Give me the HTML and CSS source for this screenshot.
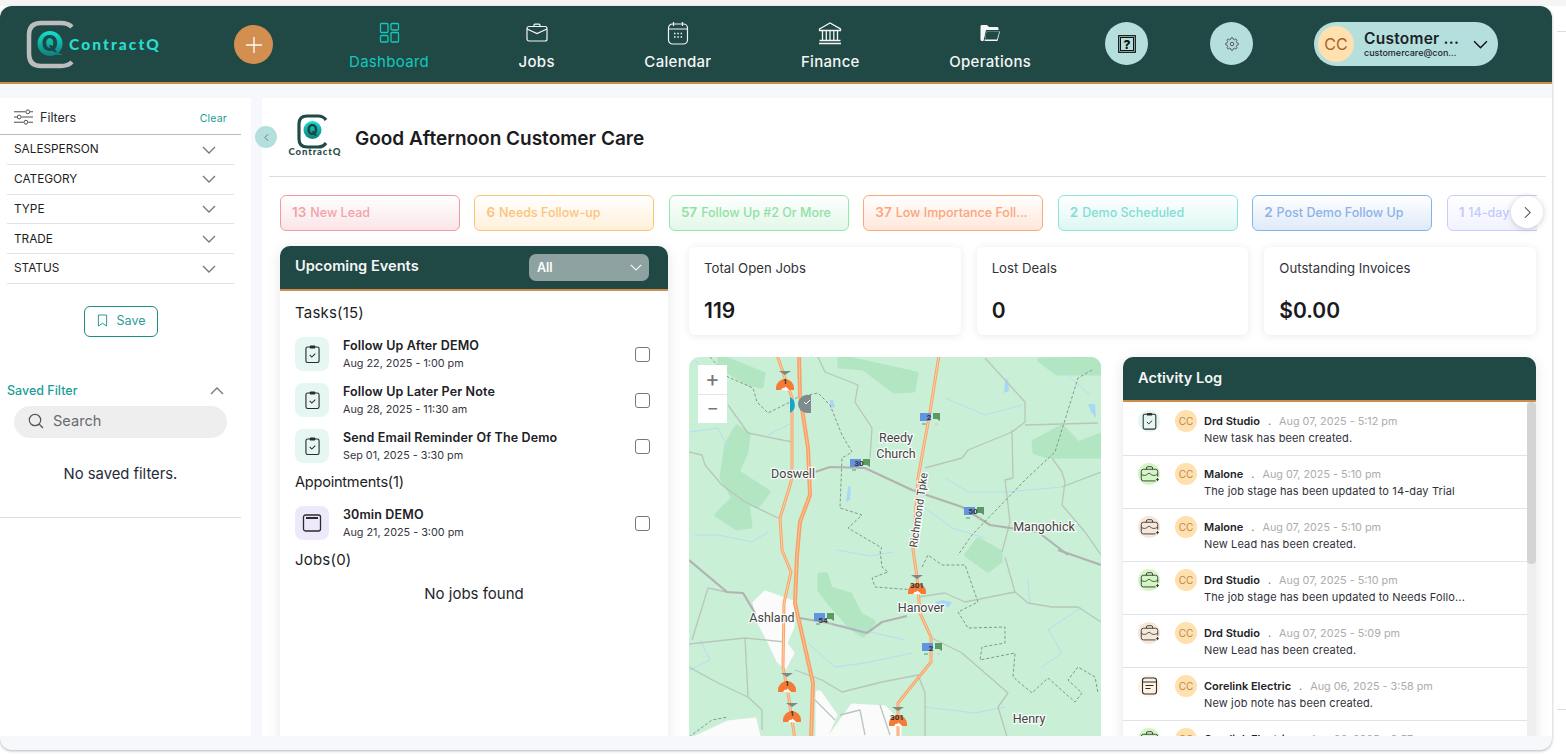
FILE: index.html
```html
<!DOCTYPE html>
<html lang="en">
<head>
<meta charset="utf-8">
<title>ContractQ Dashboard</title>
<link rel="stylesheet" href="styles.css">
</head>
<body>
<svg class="sprite" aria-hidden="true">
  <symbol id="i-chev" viewBox="0 0 14 8"><path d="M1 1l6 6 6-6" fill="none" stroke="currentColor" stroke-width="1.3"/></symbol>
  <symbol id="i-clip" viewBox="0 0 16 20"><rect x="1" y="2.500" width="14" height="16.500" rx="1.800" fill="none" stroke="currentColor" stroke-width="1.200"/><rect x="5" y="1" width="6" height="3" rx="1" fill="currentColor"/><path d="M5 11l2.200 2.200L11 9.500" fill="none" stroke="currentColor" stroke-width="1.100"/></symbol>
  <symbol id="i-case" viewBox="0 0 22 20"><path d="M7.500 4.500V3a1.500 1.500 0 0 1 1.500-1.500h4A1.500 1.500 0 0 1 14.500 3v1.500" fill="none" stroke="currentColor" stroke-width="1"/><path d="M18 18H4a2.500 2.500 0 0 1-2.500-2.500V7A2.500 2.500 0 0 1 4 4.500h14A2.500 2.500 0 0 1 20.500 7v6" fill="none" stroke="currentColor" stroke-width="1"/><path d="M1.500 10.500c3 1.500 4 1.500 6 .5l3-2 3 2c2 1 3 1 7-.5" fill="none" stroke="currentColor" stroke-width=".9"/><path d="M18.500 16.500h3.500M20.250 14.700v3.600" stroke="currentColor" stroke-width="1"/></symbol>
  <symbol id="i-note" viewBox="0 0 16 18"><rect x="1" y="1" width="14" height="16" rx="2.500" fill="none" stroke="currentColor" stroke-width="1.100"/><path d="M1 5h14M4 8.500h8M4 11.500h5" fill="none" stroke="currentColor" stroke-width="1"/></symbol>
  <symbol id="m-dome" viewBox="0 0 22 22"><path d="M5 0h12l-6 4z" fill="#7c8a8c"/><path d="M2 19v-2a9 9 0 0 1 18 0v2z" fill="#f47a35"/><path d="M7 19l2-2.500 1 .8 1.500-1.800 1.500 1.500 1 .8 1.500 1.700z" fill="#fff"/></symbol>
  <symbol id="m-flag" viewBox="0 0 22 12"><path d="M1 0h11v7l-3 1H1z" fill="#6394e2"/><path d="M14 0h7v8l-3-2h-4z" fill="#5b9a63"/><path d="M3 11h4" stroke="#5b9a63"/><path d="M16 11h3" stroke="#f2b6b6"/></symbol>
</svg>

<div class="app">
  <header class="topbar">
    <svg class="logo" viewBox="26 20 136 50" aria-label="ContractQ">
      <defs><linearGradient id="qg" x1="0" y1="0" x2="0" y2="1"><stop offset="0" stop-color="#12e2cf"/><stop offset="1" stop-color="#0e7f7c"/></linearGradient></defs>
      <path d="M72 27c-3-3-6-4-11-4H41c-8 0-12 4-12 12v19c0 8 4 12 12 12h20c5 0 8-1 11-4" fill="none" stroke="#bdbdbd" stroke-width="4.500"/>
      <circle cx="50" cy="43.500" r="12.500" fill="url(#qg)"/>
      <path d="M55 51l8 4h-8z" fill="#0e7f7c"/>
      <text class="logo-q" x="50" y="51">Q</text>
      <text class="logo-word" x="69" y="50">ContractQ</text>
    </svg>
    <button class="plus" aria-label="Add"><svg viewBox="0 0 20 20"><path d="M1 10h18M10 1v18" stroke="#fff" stroke-width="1.500"/></svg></button>
    <nav class="nav">
      <a class="nav-item active"><svg viewBox="0 0 24 24"><g fill="none" stroke="currentColor" stroke-width="1.300"><rect x="3.500" y="2.500" width="7.500" height="9" rx="1"/><rect x="14" y="2.500" width="7.500" height="6.500" rx="1"/><rect x="3.500" y="14.500" width="7.500" height="6.500" rx="1"/><rect x="14" y="11.500" width="7.500" height="9.500" rx="1"/></g></svg><span>Dashboard</span></a>
      <a class="nav-item"><svg viewBox="0 0 24 24"><g fill="none" stroke="currentColor" stroke-width="1.200"><path d="M9 5.500V4.200c0-.6.400-1 1-1h4c.6 0 1 .4 1 1v1.300"/><rect x="2" y="5.500" width="20" height="14.500" rx="2"/><path d="M2 8l10 4.500L22 8"/></g></svg><span>Jobs</span></a>
      <a class="nav-item"><svg viewBox="0 0 24 24"><g fill="none" stroke="currentColor" stroke-width="1.200"><rect x="2.500" y="3" width="19" height="20" rx="4"/><path d="M2.500 8h19M7.500 1v4M16.500 1v4"/></g><path d="M8 12.500h1.500M11.300 12.500h1.500M14.600 12.500h1.500M8 16h1.500M11.300 16h1.500M14.600 16h1.500" stroke="currentColor" stroke-width="1.500"/></svg><span>Calendar</span></a>
      <a class="nav-item"><svg viewBox="0 0 24 24"><g fill="none" stroke="currentColor" stroke-width="1.300"><path d="M1.500 8L12 2l10.500 6v1.500h-21z"/><path d="M4.500 10v9M8.300 10v9M12 10v9M15.800 10v9M19.500 10v9M1.500 19.500h21"/></g><path d="M1 22.500h22" stroke="currentColor" stroke-width="1.500"/></svg><span>Finance</span></a>
      <a class="nav-item"><svg viewBox="0 0 24 24"><path d="M2.500 5.500c0-1 .7-1.500 1.500-1.500h5l2 2h8c1 0 1.500.6 1.500 1.500V9H8L5.500 20H4c-1 0-1.500-.6-1.500-1.500z" fill="currentColor"/><path d="M8.500 10.500H22L19.500 20H6.500z" fill="currentColor"/><path d="M8.500 10.500h12.800L19 18.500H7z" fill="#204845"/></svg><span>Operations</span></a>
    </nav>
    <button class="round help" aria-label="Help"><svg viewBox="0 0 18 18"><rect x=".7" y=".7" width="16.600" height="16.600" fill="none" stroke="#111" stroke-width="1.200"/><rect x="2.500" y="2.500" width="13" height="13" fill="none" stroke="#111"/><text class="help-q" x="9" y="13.500">?</text></svg></button>
    <button class="round gear" aria-label="Settings"><svg viewBox="0 0 24 24" fill="none" stroke="#444" stroke-width="1.500"><path d="M12 15a3 3 0 1 0 0-6 3 3 0 0 0 0 6z"/><path d="M19.400 15a1.650 1.650 0 0 0 .33 1.820l.06.06a2 2 0 1 1-2.830 2.830l-.06-.06a1.650 1.650 0 0 0-2.820 1.170V21a2 2 0 1 1-4 0v-.09A1.650 1.650 0 0 0 9 19.400a1.650 1.650 0 0 0-1.820.33l-.06.06a2 2 0 1 1-2.830-2.830l.06-.06a1.650 1.650 0 0 0-1.170-2.820H3a2 2 0 1 1 0-4h.09A1.650 1.650 0 0 0 4.600 9a1.650 1.650 0 0 0-.33-1.820l-.06-.06a2 2 0 1 1 2.830-2.830l.06.06a1.650 1.650 0 0 0 1.820.33H9a1.650 1.650 0 0 0 1-1.510V3a2 2 0 1 1 4 0v.09a1.650 1.650 0 0 0 1 1.510 1.650 1.650 0 0 0 1.820-.33l.06-.06a2 2 0 1 1 2.830 2.830l-.06.06a1.650 1.650 0 0 0-.33 1.820V9a1.650 1.650 0 0 0 1.510 1H21a2 2 0 1 1 0 4h-.09a1.650 1.650 0 0 0-1.510 1z"/></svg></button>
    <div class="user">
      <span class="avatar big">CC</span>
      <div class="user-text"><strong>Customer ...</strong><small>customercare@con...</small></div>
      <svg class="user-chev"><use href="#i-chev"/></svg>
    </div>
  </header>

  <div class="main">
    <aside class="sidebar">
      <div class="filter-head">
        <svg class="sliders" viewBox="0 0 20 16"><g fill="none" stroke="#444" stroke-width="1"><path d="M0 2.500h12M17 2.500h3M0 8h3M8 8h12M0 13.500h10M15 13.500h5"/><circle cx="14.500" cy="2.500" r="2"/><circle cx="5.500" cy="8" r="2"/><circle cx="12.500" cy="13.500" r="2"/></g></svg>
        <span class="filter-title">Filters</span>
        <a class="clear">Clear</a>
      </div>
      <ul class="facets">
        <li>SALESPERSON<svg><use href="#i-chev"/></svg></li>
        <li>CATEGORY<svg><use href="#i-chev"/></svg></li>
        <li>TYPE<svg><use href="#i-chev"/></svg></li>
        <li>TRADE<svg><use href="#i-chev"/></svg></li>
        <li>STATUS<svg><use href="#i-chev"/></svg></li>
      </ul>
      <button class="save"><svg viewBox="0 0 12 14"><path d="M1.500 1h9v12L6 10l-4.500 3z" fill="none" stroke="#1a9088" stroke-width="1"/></svg>Save</button>
      <div class="saved-head"><span>Saved Filter</span><svg><use href="#i-chev"/></svg></div>
      <div class="search"><svg viewBox="0 0 16 16"><circle cx="7" cy="7" r="5.700" fill="none" stroke="#555" stroke-width="1.200"/><path d="M11 11l4 4" stroke="#555" stroke-width="1.200"/></svg><span>Search</span></div>
      <p class="none-saved">No saved filters.</p>
    </aside>

    <section class="content">
      <button class="collapse" aria-label="Collapse"><svg viewBox="0 0 6 10"><path d="M5 1L1 5l4 4" fill="none" stroke="#4c6f6d" stroke-width="1"/></svg></button>
      <div class="greeting">
        <svg class="mini-logo" viewBox="0 0 54 44" aria-label="ContractQ">
          <path d="M38 6c-2-3-4-4-8-4H19c-6 0-8 3-8 8v15c0 5 2 8 8 8h11c4 0 6-1 8-4" fill="none" stroke="#1f4a47" stroke-width="3.200"/>
          <circle cx="24.500" cy="16" r="9" fill="url(#qg)"/>
          <text class="mini-q" x="24.500" y="21">Q</text>
          <text class="mini-word" x="27" y="41">ContractQ</text>
        </svg>
        <h1>Good Afternoon Customer Care</h1>
      </div>

      <div class="stages-wrap">
        <div class="stages">
          <div class="stage red"><b>13</b> New Lead</div>
          <div class="stage amber"><b>6</b> Needs Follow-up</div>
          <div class="stage green"><b>57</b> Follow Up #2 Or More</div>
          <div class="stage coral"><b>37</b> Low Importance Foll...</div>
          <div class="stage teal"><b>2</b> Demo Scheduled</div>
          <div class="stage blue"><b>2</b> Post Demo Follow Up</div>
          <div class="stage lav"><b>1</b> 14-day</div>
        </div>
        <button class="next" aria-label="Next"><svg viewBox="0 0 8 14"><path d="M1 1l6 6-6 6" fill="none" stroke="#444" stroke-width="1.200"/></svg></button>
      </div>

      <div class="columns">
        <div class="card events">
          <div class="card-head">
            <h2>Upcoming Events</h2>
            <div class="select"><span>All</span><svg><use href="#i-chev"/></svg></div>
          </div>
          <div class="events-body">
            <h3>Tasks(15)</h3>
            <div class="event"><span class="ev-icon mint"><svg><use href="#i-clip"/></svg></span><div class="ev-text"><strong>Follow Up After DEMO</strong><small>Aug 22, 2025 - 1:00 pm</small></div><input type="checkbox" aria-label="done"></div>
            <div class="event"><span class="ev-icon mint"><svg><use href="#i-clip"/></svg></span><div class="ev-text"><strong>Follow Up Later Per Note</strong><small>Aug 28, 2025 - 11:30 am</small></div><input type="checkbox" aria-label="done"></div>
            <div class="event"><span class="ev-icon mint"><svg><use href="#i-clip"/></svg></span><div class="ev-text"><strong>Send Email Reminder Of The Demo</strong><small>Sep 01, 2025 - 3:30 pm</small></div><input type="checkbox" aria-label="done"></div>
            <h3 class="sec">Appointments(1)</h3>
            <div class="event"><span class="ev-icon lilac"><svg viewBox="0 0 20 20"><rect x="1.500" y="2" width="17" height="16" rx="2" fill="none" stroke="#2b2b2b" stroke-width="1.300"/><path d="M4 5h12" stroke="#2b2b2b" stroke-width="2"/></svg></span><div class="ev-text"><strong>30min DEMO</strong><small>Aug 21, 2025 - 3:00 pm</small></div><input type="checkbox" aria-label="done"></div>
            <h3 class="jobs">Jobs(0)</h3>
            <p class="none-jobs">No jobs found</p>
          </div>
        </div>

        <div class="right">
          <div class="stats">
            <div class="stat"><span>Total Open Jobs</span><strong>119</strong></div>
            <div class="stat"><span>Lost Deals</span><strong>0</strong></div>
            <div class="stat"><span>Outstanding Invoices</span><strong>$0.00</strong></div>
          </div>
          <div class="lower">
            <div class="map">
              <svg class="map-art" viewBox="689 357 412 380" aria-label="Map">
                <rect x="689" y="357" width="412" height="380" fill="#c9efd6"/>
                <g class="patch">
                  <path d="M840 357L916 374 913 390 894 391 864 368 840 366z"/>
                  <path d="M720 357L763 374 761 386 748 383 720 366z"/>
                  <path d="M737 427L748 434 746 452 737 472 768 492 757 506 747 502 750 526 737 528 717 515 734 498 722 478 727 444z"/>
                  <path d="M1034 442L1062 427 1078 444 1101 435 1101 456 1065 456 1048 456 1035 452z"/>
                  <path d="M1040 360L1101 359 1101 373 1057 373z"/>
                  <path d="M967 555L978 540 1000 552 1000 561 988 570 977 562z"/>
                  <path d="M820 575L826 575 830 589 850 595 860 615 873 622 863 635 852 628 830 603 820 590z"/>
                </g>
                <g class="town">
                  <path d="M754 603L765 592 793 602 793 627 786 643 793 653 785 668 778 661 768 640 759 623z"/>
                  <path d="M827 740L852 705 885 707 900 723 900 740z"/>
                  <path d="M689 740L728 722 755 719 760 740z"/>
                  <path d="M817 692L820 692 836 715 825 740 817 740z"/>
                </g>
                <g fill="#a9d8f5">
                  <path d="M1005 380l3-1 1 12-5 2z"/><path d="M830 400l3 0 2 7-5 1z"/><path d="M848 487l3-1-1 14-4 2z"/><path d="M935 602l8-2 9 2-3 5-9 0z"/><path d="M1088 404l7 0 1 14-5-6z"/>
                </g>
                <g class="streams">
                  <path d="M945 398L985 415 1022 405"/><path d="M768 435L792 423"/><path d="M689 432L718 428 728 448"/><path d="M925 508L952 528 985 538"/><path d="M695 535L718 535 752 542 768 532"/><path d="M808 643L835 667 865 663 912 653"/><path d="M1028 580L1030 603"/><path d="M1082 607L1048 630 1062 653 1042 667"/><path d="M925 707L975 713 1005 707"/><path d="M945 478L968 492 1005 492 1062 487"/><path d="M700 640L710 660 690 670"/><path d="M837 550L870 556 893 552"/><path d="M695 360L725 395 712 420"/><path d="M840 625L905 640"/><path d="M1050 360L1090 395"/>
                </g>
                <g class="minor">
                  <path d="M818 357L825 372 858 385 855 402 872 428 870 458"/><path d="M985 358L1025 402 1025 422 1012 432 968 450 962 458 925 468"/><path d="M1025 425L1098 423"/><path d="M1012 430L1013 478 1005 480 1010 522 1002 552"/><path d="M689 452L702 455 705 465 722 485 745 502 778 518"/><path d="M728 405L748 433 792 442"/><path d="M1052 458L1062 472 1065 482 1062 505 1085 532 1101 555"/><path d="M1101 472L1062 487"/><path d="M708 588L692 640"/><path d="M689 644L745 638 785 642"/><path d="M745 638L748 697 762 710 762 730"/><path d="M689 667L718 683 748 697"/><path d="M795 670L822 680 842 692 882 682 918 675 925 693 925 740"/><path d="M932 638L962 653 1008 693 998 707 1008 740"/><path d="M918 597L945 593 965 602 1015 592 1028 603 1052 607 1078 607 1101 622"/><path d="M1005 557L1015 592"/><path d="M708 588L727 592"/><path d="M840 715L860 710 865 735M880 705L890 735M815 700L835 720"/>
                </g>
                <g class="major">
                  <path d="M815 472L830 467 865 468 912 490 962 507 990 525 1038 532 1068 555"/><path d="M1058 550L1101 565"/><path d="M689 560L727 592 743 593 755 613"/><path d="M800 618L828 623 867 633 882 622 907 616"/>
                </g>
                <g class="dash">
                  <path d="M710 357L728 377 753 388 757 402 768 413 788 403 798 397 818 393 830 405 842 435 852 452 842 458 840 508 862 515 848 528 882 548 880 550 882 567 888 572 872 578 875 587 915 590"/>
                  <path d="M1092 370L1078 378 1055 452 1025 480 972 535 958 555"/>
                  <path d="M922 567L928 555 942 565 965 565 978 602 958 612 968 628 1005 627 1005 643 982 647 980 660 1015 653 1013 677 1032 693 1048 678 1075 702 1082 693 1068 680 1078 667 1095 677 1098 693"/>
                  <path d="M689 737L712 720 728 717"/>
                </g>
                <g class="hwy">
                  <path d="M777 355L792 398 792 472 791 482 780 518 782 550 791 572 784 603 783 667 788 693 795 740"/>
                  <path d="M939 355L930 412 918 478 913 550 917 577 920 613 931 637 931 662 898 703 898 740"/>
                </g>
                <g class="hwy-inner">
                  <path d="M777 355L792 398 792 472 791 482 780 518 782 550 791 572 784 603 783 667 788 693 795 740"/>
                  <path d="M939 355L930 412 918 478 913 550 917 577 920 613 931 637 931 662 898 703 898 740"/>
                </g>
                <path class="hwy-big" d="M799 355L800 395 808 448 810 495 800 522 797 555 795 603 813 683 811 740"/>
                <path class="hwy-big-inner" d="M799 355L800 395 808 448 810 495 800 522 797 555 795 603 813 683 811 740"/>
                <path d="M790 397a9 9 0 0 1 0 16z" fill="#1ba3c6"/>
                <path d="M811 395h-4a9 9 0 0 0 0 18h4z" fill="#7f8c8e"/>
                <path d="M804 402l2 2 4-4" fill="none" stroke="#fff"/>
                <use href="#m-dome" x="774" y="371" width="22" height="22"/>
                <use href="#m-dome" x="906" y="575" width="22" height="22"/>
                <use href="#m-dome" x="776" y="673" width="22" height="22"/>
                <use href="#m-dome" x="781" y="703" width="22" height="22"/>
                <use href="#m-dome" x="887" y="707" width="22" height="22"/>
                <use href="#m-flag" x="919" y="413" width="22" height="12"/>
                <use href="#m-flag" x="849" y="459" width="22" height="12"/>
                <use href="#m-flag" x="963" y="507" width="22" height="12"/>
                <use href="#m-flag" x="813" y="613" width="22" height="12"/>
                <use href="#m-flag" x="921" y="643" width="22" height="12"/>
                <g class="shield">
                  <text x="785" y="384">1</text><text x="917" y="588">301</text><text x="787" y="686">1</text><text x="792" y="716">1</text><text x="897" y="720">301</text><text x="929" y="420">2</text><text x="859" y="466">30</text><text x="973" y="514">50</text><text x="823" y="623">54</text><text x="931" y="651">2</text>
                </g>
                <g class="place">
                  <text x="896" y="442">Reedy</text><text x="896" y="458">Church</text><text x="793" y="478">Doswell</text><text x="1044" y="531">Mangohick</text><text x="772" y="622">Ashland</text><text x="921" y="612">Hanover</text><text x="1029" y="723">Henry</text>
                  <text class="road-name" transform="translate(917 548) rotate(-82)">Richmond Tpke</text>
                </g>
              </svg>
              <div class="zoom-ctl"><span>+</span><span>−</span></div>
            </div>

            <div class="card activity">
              <div class="card-head tall"><h2>Activity Log</h2></div>
              <div class="log-wrap">
                <ul class="log">
                  <li><span class="log-icon mint"><svg><use href="#i-clip"/></svg></span><span class="avatar">CC</span><div class="log-text"><div class="log-meta"><b>Drd Studio</b><i>.</i><time>Aug 07, 2025 - 5:12 pm</time></div><p>New task has been created.</p></div></li>
                  <li><span class="log-icon lime"><svg><use href="#i-case"/></svg></span><span class="avatar">CC</span><div class="log-text"><div class="log-meta"><b>Malone</b><i>.</i><time>Aug 07, 2025 - 5:10 pm</time></div><p>The job stage has been updated to 14-day Trial</p></div></li>
                  <li><span class="log-icon sand"><svg><use href="#i-case"/></svg></span><span class="avatar">CC</span><div class="log-text"><div class="log-meta"><b>Malone</b><i>.</i><time>Aug 07, 2025 - 5:10 pm</time></div><p>New Lead has been created.</p></div></li>
                  <li><span class="log-icon lime"><svg><use href="#i-case"/></svg></span><span class="avatar">CC</span><div class="log-text"><div class="log-meta"><b>Drd Studio</b><i>.</i><time>Aug 07, 2025 - 5:10 pm</time></div><p>The job stage has been updated to Needs Follo...</p></div></li>
                  <li><span class="log-icon sand"><svg><use href="#i-case"/></svg></span><span class="avatar">CC</span><div class="log-text"><div class="log-meta"><b>Drd Studio</b><i>.</i><time>Aug 07, 2025 - 5:09 pm</time></div><p>New Lead has been created.</p></div></li>
                  <li><span class="log-icon cream"><svg><use href="#i-note"/></svg></span><span class="avatar">CC</span><div class="log-text"><div class="log-meta"><b>Corelink Electric</b><i>.</i><time>Aug 06, 2025 - 3:58 pm</time></div><p>New job note has been created.</p></div></li>
                  <li><span class="log-icon lime"><svg><use href="#i-case"/></svg></span><span class="avatar">CC</span><div class="log-text"><div class="log-meta"><b>Corelink Electric</b><i>.</i><time>Aug 06, 2025 - 3:57 pm</time></div></div></li>
                </ul>
                <div class="scroll"><div class="thumb"></div></div>
              </div>
            </div>
          </div>
        </div>
      </div>
    </section>
  </div>
</div>
<div class="edge-mark top"></div>
<div class="edge-mark bottom"></div>
</body>
</html>
```
FILE: styles.css
```css
* { box-sizing: border-box; }
html, body { margin: 0; height: 100%; }
body { background: #fff; font-family: Inter, "Noto Sans", sans-serif; color: #1d1d24; overflow: hidden; position: relative; }
body::before { content: ""; display: block; height: 6px; background: #f5f5f5; }
h1, h2, h3, p, ul { margin: 0; padding: 0; }
ul { list-style: none; }
button { font-family: inherit; border: 0; padding: 0; cursor: pointer; }
.sprite { display: none; }

.app { width: 1552px; height: 744px; border-radius: 12px; overflow: hidden; background: #f6f8fc; box-shadow: 0 1px 3px rgba(0,0,0,.3); padding-bottom: 14px; display: flex; flex-direction: column; }

.topbar { flex: none; height: 78px; background: #204845; border-bottom: 2px solid #d08c4b; display: flex; align-items: flex-start; padding-left: 26px; }
.logo { width: 136px; height: 50px; margin-top: 14px; flex: none; }
.logo-q { font: 800 21px Inter, sans-serif; fill: #1d4744; text-anchor: middle; }
.logo-word { font: 900 15.500px Lato, sans-serif; fill: #28dccf; letter-spacing: 2.100px; }
.plus { flex: none; width: 39px; height: 39px; border-radius: 50%; background: #d38f4f; margin: 19px 0 0 72px; display: flex; align-items: center; justify-content: center; }
.plus svg { width: 18px; height: 18px; }
.nav { display: flex; gap: 89.500px; margin-left: 76px; flex: none; width: 680px; }
.nav-item { display: flex; flex-direction: column; align-items: center; color: #f4f6f5; font-size: 15px; font-weight: 500; letter-spacing: .3px; padding-top: 15px; }
.nav-item svg { width: 24px; height: 24px; margin-bottom: 8px; }
.nav-item span { line-height: 18px; }
.nav-item.active { color: #12c9bf; font-weight: 400; }
.round { flex: none; width: 43px; height: 43px; border-radius: 50%; background: #b5dfdc; margin-top: 16px; display: flex; align-items: center; justify-content: center; }
.help { margin-left: 76px; }
.help svg { width: 18px; height: 18px; }
.help-q { font: 800 12px Inter, sans-serif; text-anchor: middle; fill: #111; }
.gear { margin-left: 62px; }
.gear svg { width: 14px; height: 14px; }
.user { flex: none; width: 184px; height: 44px; margin: 16px 0 0 61px; border-radius: 22px; background: #b5dfdc; display: flex; align-items: center; padding-left: 4px; position: relative; }
.avatar { flex: none; width: 22px; height: 22px; border-radius: 50%; background: #ffe0ae; color: #b98a52; font-size: 10px; display: flex; align-items: center; justify-content: center; }
.avatar.big { width: 36px; height: 36px; font-size: 16px; color: #a5622a; }
.user-text { margin-left: 10px; display: flex; flex-direction: column; width: 98px; }
.user-text strong { font-size: 15.500px; line-height: 17px; font-weight: 600; color: #1a1f2b; white-space: nowrap; letter-spacing: .25px; }
.user-text small { font-size: 9px; line-height: 12px; font-weight: 500; color: #1a1f2b; white-space: nowrap; }
.user-chev { width: 15px; height: 9px; margin-left: 11px; color: #111; }

.main { flex: 1; min-height: 0; display: flex; gap: 11px; padding-top: 14px; overflow: hidden; }
.sidebar { flex: none; width: 251px; background: #fff; }
.filter-head { height: 37px; width: 241px; border-bottom: 1px solid #bbb; display: flex; align-items: flex-start; padding: 11px 14px 0 14px; }
.sliders { width: 19px; height: 16px; }
.filter-title { font-size: 12.500px; margin-left: 7px; line-height: 16px; color: #2a2a30; padding-top: 1px; }
.clear { margin-left: auto; font-size: 10.500px; color: #1a9e96; line-height: 14px; margin-top: 3px; letter-spacing: .2px; }
.facets { width: 227px; margin-left: 7px; }
.facets li { height: 29.800px; border-bottom: 1px solid #e1e3e8; display: flex; align-items: center; justify-content: space-between; padding: 0 18px .5px 7px; font-size: 11.800px; color: #1d1d24; }
.facets svg { width: 14px; height: 8px; color: #777; margin-top: 1px; }
.save { display: flex; align-items: center; justify-content: center; gap: 9px; width: 74px; height: 31px; margin: 22px 0 0 84px; border: 1px solid #1a8f87; border-radius: 6px; background: #fff; color: #2b9c94; font-size: 12.500px; padding-bottom: 2px; }
.save svg { width: 11px; height: 13px; }
.saved-head { display: flex; justify-content: space-between; align-items: center; margin: 44px 0 0 7px; width: 217px; font-size: 12.500px; font-weight: 500; color: #1a9e96; height: 20px; }
.saved-head svg { width: 14px; height: 8px; color: #777; transform: rotate(180deg); }
.search { display: flex; align-items: center; gap: 9px; width: 213px; height: 32px; margin: 5px 0 0 14px; padding: 0 0 1px 14px; border-radius: 16px; background: #eee; color: #6a6a70; font-size: 14.600px; }
.search svg { width: 16px; height: 16px; }
.none-saved { width: 241px; text-align: center; font-size: 14.800px; line-height: 20px; margin-top: 26px; padding-bottom: 33px; border-bottom: 1px solid #ddd; color: #1f2a3a; }

.content { flex: none; width: 1290px; background: #fff; position: relative; padding: 0 0 0 7px; }
.collapse { position: absolute; left: -7px; top: 28px; width: 22px; height: 22px; border-radius: 50%; background: #b5dfdc; display: flex; align-items: center; justify-content: center; }
.collapse svg { width: 5px; height: 9px; }
.greeting { width: 1277px; height: 79px; border-bottom: 1px solid #ddd; display: flex; align-items: flex-start; padding: 16px 0 0 19px; }
.mini-logo { width: 54px; height: 44px; flex: none; }
.mini-q { font: 800 14px Inter, sans-serif; text-anchor: middle; fill: #1d4744; }
.mini-word { font: 900 9.500px Lato, sans-serif; fill: #2a4b49; text-anchor: middle; letter-spacing: .9px; }
h1 { font-size: 19px; font-weight: 600; margin: 13px 0 0 13px; line-height: 23px; color: #1b1b20; }

.stages-wrap { position: relative; margin: 18px 0 0 11px; width: 1257px; }
.stages { display: flex; gap: 14.450px; overflow: hidden; }
.stage { flex: none; width: 180px; height: 36px; border: 1px solid; border-radius: 6px; display: flex; align-items: center; padding: 0 0 2px 11px; gap: 4px; font-size: 12.500px; font-weight: 500; white-space: nowrap; background: linear-gradient(#fff, var(--tint)); }
.stage b { font-size: 13.500px; font-weight: 600; }
.red { color: #f2a3a9; border-color: #f39aa0; --tint: #fae5e7; }
.amber { color: #fcc47a; border-color: #fbc376; --tint: #fff0da; }
.green { color: #8fe2a6; border-color: #93e7aa; --tint: #e2f7e8; }
.coral { color: #fca47b; border-color: #fca77d; --tint: #ffe7da; }
.teal { color: #7edfd6; border-color: #89e5dd; --tint: #ddf7f3; }
.blue { color: #8cb2e8; border-color: #82b4ec; --tint: #dfeaf9; }
.lav { color: #c4c9fb; border-color: #c9cdfc; --tint: #f1f2ff; }
.next { position: absolute; left: 1231px; top: 1px; width: 32px; height: 32px; border-radius: 50%; background: #fff; box-shadow: 0 1px 6px rgba(0,0,0,.2); display: flex; align-items: center; justify-content: center; }
.next svg { width: 7px; height: 13px; }

.columns { display: flex; gap: 21px; margin: 15px 0 0 11px; width: 1256px; align-items: flex-start; }
.card { background: #fff; border-radius: 10px; overflow: hidden; box-shadow: 0 2px 14px rgba(0,0,0,.1); }
.events { flex: none; width: 388px; height: 520px; }
.card-head { height: 45px; background: #204845; border-bottom: 2px solid #d08c4b; display: flex; align-items: flex-start; justify-content: space-between; padding: 10px 19px 0 15px; }
.card-head h2 { font-size: 14.600px; line-height: 20px; font-weight: 600; color: #f3f6f5; }
.card-head.tall { height: 45px; padding-top: 11px; }
.select { width: 120px; height: 27px; margin-top: -2px; border-radius: 7px; background: #8ea3a1; display: flex; align-items: center; justify-content: space-between; padding: 0 7px 0 8px; color: #fff; font-size: 12.500px; font-weight: 600; }
.select svg { width: 12px; height: 7px; }
.events-body { padding: 12px 15px; }
h3 { font-size: 15px; font-weight: 400; line-height: 20px; color: #1d1d24; letter-spacing: .2px; }
h3.sec { margin-top: 9px; font-size: 14.600px; letter-spacing: -.25px; }
h3.jobs { margin-top: 10px; }
.event { display: flex; align-items: center; height: 34px; margin-top: 12px; }
h3 + .event { margin-top: 14px; }
.ev-icon { flex: none; width: 34px; height: 34px; border-radius: 8px; display: flex; align-items: center; justify-content: center; color: #2b2b2b; }
.ev-icon svg { width: 15px; height: 20px; }
.mint { background: #e6f7f3; }
.lilac { background: #ede9fb; }
.ev-icon.lilac svg { width: 20px; height: 20px; }
.ev-text { margin-left: 14px; flex: 1; display: flex; flex-direction: column; }
.ev-text strong { font-size: 12.500px; font-weight: 600; line-height: 20px; color: #202026; letter-spacing: .14px; }
.ev-text small { font-size: 10.800px; line-height: 16px; color: #35353d; }
.event input { appearance: none; flex: none; width: 15px; height: 15px; margin: 0 3px 0 0; border: 1px solid #777; border-radius: 3px; background: #fff; }
.none-jobs { text-align: center; font-size: 15px; line-height: 20px; margin-top: 14px; color: #25252c; }

.right { flex: none; width: 847px; }
.stats { display: grid; grid-template-columns: repeat(3, 1fr); gap: 16px; margin-top: 1px; }
.stat { height: 88px; background: #fff; border-radius: 6px; box-shadow: 0 1px 10px rgba(0,0,0,.09); padding: 13px 15px; display: flex; flex-direction: column; }
.stat span { font-size: 13.200px; line-height: 16px; color: #33333a; }
.stat strong { font-size: 21px; font-weight: 600; line-height: 28px; margin-top: 21px; color: #1a1a20; }
.lower { display: flex; gap: 22px; margin-top: 22px; align-items: flex-start; }
.map { flex: none; width: 412px; height: 380px; border-radius: 10px 10px 0 0; overflow: hidden; position: relative; }
.map-art { display: block; width: 412px; height: 380px; }
.patch path { fill: #b2e5c2; stroke: #b2e5c2; stroke-width: 5; stroke-linejoin: round; }
.town path { fill: #fbfbfb; stroke: #fbfbfb; stroke-width: 3; stroke-linejoin: round; }
.streams path { fill: none; stroke: #b5def2; stroke-width: 1; }
.minor path { fill: none; stroke: #b8c6bc; stroke-width: 1.300; stroke-linejoin: round; }
.major path { fill: none; stroke: #b0b3b0; stroke-width: 2.200; stroke-linejoin: round; }
.dash path { fill: none; stroke: #87958f; stroke-width: 1; stroke-dasharray: 3 2; }
.hwy path { fill: none; stroke: #f9a468; stroke-width: 3; stroke-linejoin: round; }
.hwy-inner path { fill: none; stroke: #fdcfac; stroke-width: 1; stroke-linejoin: round; }
.hwy-big { fill: none; stroke: #f9a065; stroke-width: 4; stroke-linejoin: round; }
.hwy-big-inner { fill: none; stroke: #fdc49c; stroke-width: 1; stroke-linejoin: round; }
.shield text { font: 700 8px Roboto, sans-serif; fill: #333; text-anchor: middle; }
.place text { font: 400 12.500px Roboto, sans-serif; fill: #444; text-anchor: middle; paint-order: stroke; stroke: #fff; stroke-width: 2.500px; stroke-opacity: .85; }
.place .road-name { font-size: 11px; text-anchor: start; }
.zoom-ctl { position: absolute; left: 9px; top: 8px; width: 29px; background: #fff; display: flex; flex-direction: column; }
.zoom-ctl span { height: 29px; display: flex; align-items: center; justify-content: center; font: 400 21px Roboto, sans-serif; color: #777; }
.zoom-ctl span + span { border-top: 1px solid #e5e5e5; }

.activity { flex: none; width: 413px; height: 400px; }
.log-wrap { display: flex; }
.log { flex: 1; min-width: 0; padding-top: 1px; }
.log li { height: 53px; border-bottom: 1px solid #e1e3ea; display: flex; align-items: flex-start; padding: 7px 0 0 15px; }
.log-icon { flex: none; width: 22px; height: 22px; border-radius: 50%; margin-right: 15px; display: flex; align-items: center; justify-content: center; color: #2d2d2d; }
.log-icon svg { width: 19px; height: 18px; }
.lime { background: #d3f6c4; }
.sand { background: #f6e7d8; }
.cream { background: #fdf2e3; }
.log-text { margin-left: 7px; min-width: 0; padding-top: 1px; }
.log-meta { display: flex; align-items: baseline; height: 20px; font-size: 11px; line-height: 20px; }
.log-meta b { font-weight: 600; color: #222228; }
.log-meta i { font-style: normal; margin: 0 8px 0 8px; color: #777; }
.log-meta time { font-size: 10.800px; color: #acacac; }
.log-text p { font-size: 11px; line-height: 15px; color: #30303a; letter-spacing: .13px; white-space: nowrap; }
.scroll { flex: none; width: 9px; background: #efefef; height: 360px; }
.thumb { height: 162px; border-radius: 4px; background: #d4d4d4; }

.edge-mark { position: absolute; right: 0; width: 9px; height: 1px; background: #ddd; }
.edge-mark.top { top: 31px; }
.edge-mark.bottom { top: 709px; }
```
